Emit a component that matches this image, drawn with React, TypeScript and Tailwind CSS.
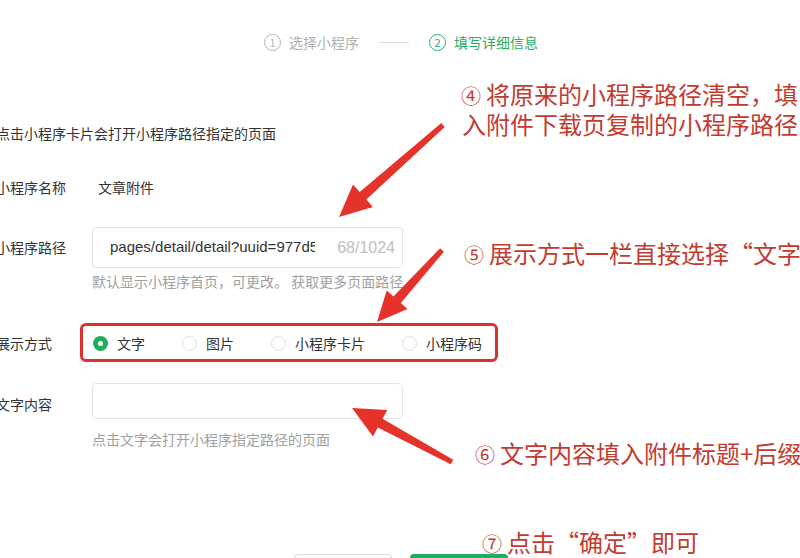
import React from 'react';

const font = '"Noto Sans CJK SC", "Noto Sans", sans-serif';

function arrowPoints(x1: number, y1: number, x2: number, y2: number, tailW: number, baseW: number, headW: number, headL: number) {
    const dx = x2 - x1;
    const dy = y2 - y1;
    const len = Math.hypot(dx, dy);
    const ux = dx / len;
    const uy = dy / len;
    const nx = -uy;
    const ny = ux;
    const bx = x2 - ux * headL;
    const by = y2 - uy * headL;
    const pts = [
        [x1 + (nx * tailW) / 2, y1 + (ny * tailW) / 2],
        [bx + (nx * baseW) / 2, by + (ny * baseW) / 2],
        [bx + (nx * headW) / 2, by + (ny * headW) / 2],
        [x2, y2],
        [bx - (nx * headW) / 2, by - (ny * headW) / 2],
        [bx - (nx * baseW) / 2, by - (ny * baseW) / 2],
        [x1 - (nx * tailW) / 2, y1 - (ny * tailW) / 2],
    ];
    return pts.map((p) => `${p[0].toFixed(1)},${p[1].toFixed(1)}`).join(' ');
}

function StepNum({ n, active }: { n: string; active?: boolean }) {
    return (
        <span
            className={`inline-flex items-center justify-center w-[17px] h-[17px] rounded-full border text-[11px] leading-none ${
                active ? 'border-[#2aae67] text-[#2aae67]' : 'border-[#b5b5b5] text-[#b5b5b5]'
            }`}
        >
            {n}
        </span>
    );
}

function Radio({ label, checked }: { label: string; checked?: boolean }) {
    return (
        <label className="flex items-center gap-[9px]">
            {checked ? (
                <span className="w-[15px] h-[15px] rounded-full bg-[#1fae5c] flex items-center justify-center">
                    <span className="w-[5px] h-[5px] rounded-full bg-white" />
                </span>
            ) : (
                <span className="w-[15px] h-[15px] rounded-full border border-[#e0e0e0] bg-white" />
            )}
            <span className="text-[14px] text-[#333]">{label}</span>
        </label>
    );
}

function Note({ num, children, className }: { num: string; children: React.ReactNode; className: string }) {
    return (
        <div className={`absolute whitespace-nowrap text-[#c33b30] text-[24px] leading-[30px] ${className}`}>
            <span className="text-[20px] mr-[5px]">{num}</span>
            {children}
        </div>
    );
}

export default function App() {
    return (
        <div className="relative w-[800px] h-[558px] overflow-hidden bg-white" style={{ fontFamily: font }}>
            {/* stepper */}
            <div className="flex justify-center items-center h-[20px] mt-[32px] text-[14px] gap-[20px] pl-[2px]">
                <div className="flex items-center gap-[8px] text-[#b0b0b0]">
                    <StepNum n="1" />
                    <span>选择小程序</span>
                </div>
                <div className="w-[30px] h-px bg-[#dcdcdc]" />
                <div className="flex items-center gap-[8px] text-[#2aae67]">
                    <StepNum n="2" active />
                    <span>填写详细信息</span>
                </div>
            </div>

            <div className="-ml-[4px] text-[14px] text-[#333]">
                <div className="mt-[71px] leading-[20px]">点击小程序卡片会打开小程序路径指定的页面</div>

                <div className="flex items-center mt-[34px] h-[20px]">
                    <div className="w-[96px]">小程序名称</div>
                    <div className="pl-[6px]">文章附件</div>
                </div>

                <div className="flex items-center mt-[30px] h-[41px]">
                    <div className="w-[96px]">小程序路径</div>
                    <div className="w-[311px] h-[41px] border border-[#e4e4e4] rounded-[4px] flex items-center pl-[17px] pr-[7px]">
                        <div
                            className="flex-1 overflow-hidden whitespace-nowrap text-[15px] text-[#333]"
                            style={{ fontFamily: '"Liberation Sans", Arial, sans-serif' }}
                        >
                            pages/detail/detail?uuid=977d5b3e2c1f
                        </div>
                        <div
                            className="ml-[22px] text-[16px] text-[#c0c0c0]"
                            style={{ fontFamily: '"Liberation Sans", Arial, sans-serif' }}
                        >
                            68/1024
                        </div>
                    </div>
                </div>
                <div className="ml-[96px] mt-[3px] leading-[20px] text-[#a0a0a0] whitespace-nowrap">
                    默认显示小程序首页，可更改。 获取更多页面路径
                </div>

                <div className="flex items-center mt-[32px] h-[40px]">
                    <div className="w-[97px]">展示方式</div>
                    <div className="flex items-center gap-[37px]">
                        <Radio label="文字" checked />
                        <Radio label="图片" />
                        <Radio label="小程序卡片" />
                        <Radio label="小程序码" />
                    </div>
                </div>

                <div className="flex items-center mt-[20px] h-[36px]">
                    <div className="w-[96px] pt-[6px]">文字内容</div>
                    <div className="w-[311px] h-[36px] border border-[#e4e4e4] rounded-[4px]" />
                </div>
                <div className="ml-[96px] mt-[10px] leading-[20px] text-[#a0a0a0]">点击文字会打开小程序指定路径的页面</div>

                <div className="flex justify-center gap-[18px] mt-[105px] pl-[6px]">
                    <div className="w-[98px] h-[36px] rounded-[4px] border border-[#dcdcdc] bg-white" />
                    <div className="w-[98px] h-[36px] rounded-[4px] bg-[#1fae5c]" />
                </div>
            </div>

            {/* annotations */}
            <div className="absolute left-[80px] top-[323px] w-[418px] h-[39px] border-[3px] border-[#d9332b] rounded-[6px]" />

            <svg className="absolute left-0 top-0" width="800" height="558">
                <polygon points={arrowPoints(443, 125, 339, 217, 5, 10, 30, 32)} fill="#e5322a" />
                <polygon points={arrowPoints(442, 250, 377, 322, 5, 10, 28, 30)} fill="#e5322a" />
                <polygon points={arrowPoints(452, 462, 352, 408, 5, 10, 30, 32)} fill="#e5322a" />
            </svg>

            <Note num="④" className="left-[461px] top-[79px]">
                将原来的小程序路径清空，填
            </Note>
            <div className="absolute left-[462px] top-[109px] whitespace-nowrap text-[#c33b30] text-[24px] leading-[30px]">
                入附件下载页复制的小程序路径
            </div>
            <Note num="⑤" className="left-[464px] top-[238px]">
                展示方式一栏直接选择“文字”
            </Note>
            <Note num="⑥" className="left-[475px] top-[438px]">
                文字内容填入附件标题+后缀
            </Note>
            <Note num="⑦" className="left-[482px] top-[527px]">
                点击“确定”即可
            </Note>
        </div>
    );
}
